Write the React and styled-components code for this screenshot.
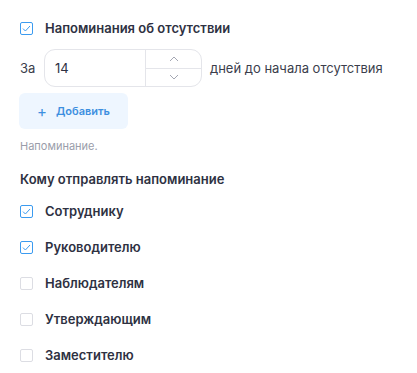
import React, { useState } from 'react'
import styled, { createGlobalStyle } from 'styled-components'

const GlobalStyle = createGlobalStyle`
  body {
    margin: 0;
    background: #ffffff;
    font-family: Inter, "Noto Sans", sans-serif;
    color: #2e3142;
  }
`

const Page = styled.div`
  width: 417px;
  padding: 20px 0 0 20px;
  box-sizing: border-box;
`

const Row = styled.label`
  display: flex;
  align-items: center;
  gap: 12px;
  height: 16px;
  cursor: pointer;
`

const Box = styled.span`
  width: 13px;
  height: 13px;
  box-sizing: border-box;
  border: 1px solid ${(props) => (props.checked ? '#3b9bf0' : '#dcdde3')};
  border-radius: 2px;
  display: flex;
  align-items: center;
  justify-content: center;
  flex-shrink: 0;
`

const Label = styled.span`
  font-size: 13px;
  font-weight: 600;
  color: #2e3142;
`

const Period = styled.div`
  display: flex;
  align-items: center;
  margin-top: 13px;
  font-size: 13px;
  color: #3b3e4c;
`

const Prefix = styled.span`
  width: 24px;
`

const Stepper = styled.div`
  display: flex;
  width: 158px;
  height: 38px;
  box-sizing: border-box;
  border: 1px solid #e4e5ea;
  border-radius: 11px;
  margin-right: 8px;
  overflow: hidden;
`

const NumberField = styled.input`
  width: 101px;
  min-width: 0;
  flex: 0 0 101px;
  box-sizing: border-box;
  border: none;
  outline: none;
  background: transparent;
  padding: 0 0 0 10px;
  font: inherit;
  font-size: 13px;
  color: #2e3142;
  border-right: 1px solid #e4e5ea;
`

const Arrows = styled.div`
  flex: 1;
  display: flex;
  flex-direction: column;
`

const Arrow = styled.button`
  flex: 1;
  border: none;
  background: transparent;
  padding: 0;
  display: flex;
  align-items: center;
  justify-content: center;
  border-bottom: ${(props) => (props.$top ? '1px solid #e4e5ea' : 'none')};
`

const AddButton = styled.button`
  margin-top: 6px;
  width: 109px;
  height: 36px;
  border: none;
  border-radius: 6px;
  background: #eef6ff;
  color: #3d8fe0;
  font: inherit;
  font-size: 11px;
  font-weight: 600;
  display: flex;
  align-items: center;
  justify-content: center;
  gap: 9px;
  margin-left: -1px;
`

const Plus = styled.span`
  font-size: 15px;
  font-weight: 400;
`

const Hint = styled.div`
  margin-top: 10px;
  font-size: 11px;
  color: #9a9daa;
`

const Title = styled.div`
  margin-top: 18px;
  font-size: 13px;
  font-weight: 600;
  color: #2e3142;
`

const List = styled.div`
  display: flex;
  flex-direction: column;
  gap: 20px;
  margin-top: 16px;
`

const Check = () => (
  <svg width="9" height="7" viewBox="0 0 9 7">
    <path d="M1 3.6 L3.4 6 L8 1" fill="none" stroke="#3b9bf0" strokeWidth="1" />
  </svg>
)

const Chevron = ({ up }) => (
  <svg width="10" height="6" viewBox="0 0 10 6">
    <path
      d={up ? 'M1 5 L5 1 L9 5' : 'M1 1 L5 5 L9 1'}
      fill="none"
      stroke="#a4a7b3"
      strokeWidth="1"
    />
  </svg>
)

const CheckRow = ({ checked, onToggle, children }) => (
  <Row onClick={onToggle}>
    <Box checked={checked}>{checked && <Check />}</Box>
    <Label>{children}</Label>
  </Row>
)

const recipients = ['Сотруднику', 'Руководителю', 'Наблюдателям', 'Утверждающим', 'Заместителю']

const App = () => {
  const [enabled, setEnabled] = useState(true)
  const [days, setDays] = useState('14')
  const [sel, setSel] = useState([true, true, false, false, false])

  const toggle = (i) => setSel(sel.map((v, j) => (j === i ? !v : v)))

  return (
    <Page>
      <GlobalStyle />
      <CheckRow checked={enabled} onToggle={() => setEnabled(!enabled)}>
        Напоминания об отсутствии
      </CheckRow>
      <Period>
        <Prefix>За</Prefix>
        <Stepper>
          <NumberField value={days} onChange={(e) => setDays(e.target.value)} />
          <Arrows>
            <Arrow $top onClick={() => setDays(String(+days + 1))}>
              <Chevron up />
            </Arrow>
            <Arrow onClick={() => setDays(String(Math.max(0, +days - 1)))}>
              <Chevron />
            </Arrow>
          </Arrows>
        </Stepper>
        дней до начала отсутствия
      </Period>
      <AddButton>
        <Plus>+</Plus>
        Добавить
      </AddButton>
      <Hint>Напоминание.</Hint>
      <Title>Кому отправлять напоминание</Title>
      <List>
        {recipients.map((r, i) => (
          <CheckRow key={r} checked={sel[i]} onToggle={() => toggle(i)}>
            {r}
          </CheckRow>
        ))}
      </List>
    </Page>
  )
}

export default App
